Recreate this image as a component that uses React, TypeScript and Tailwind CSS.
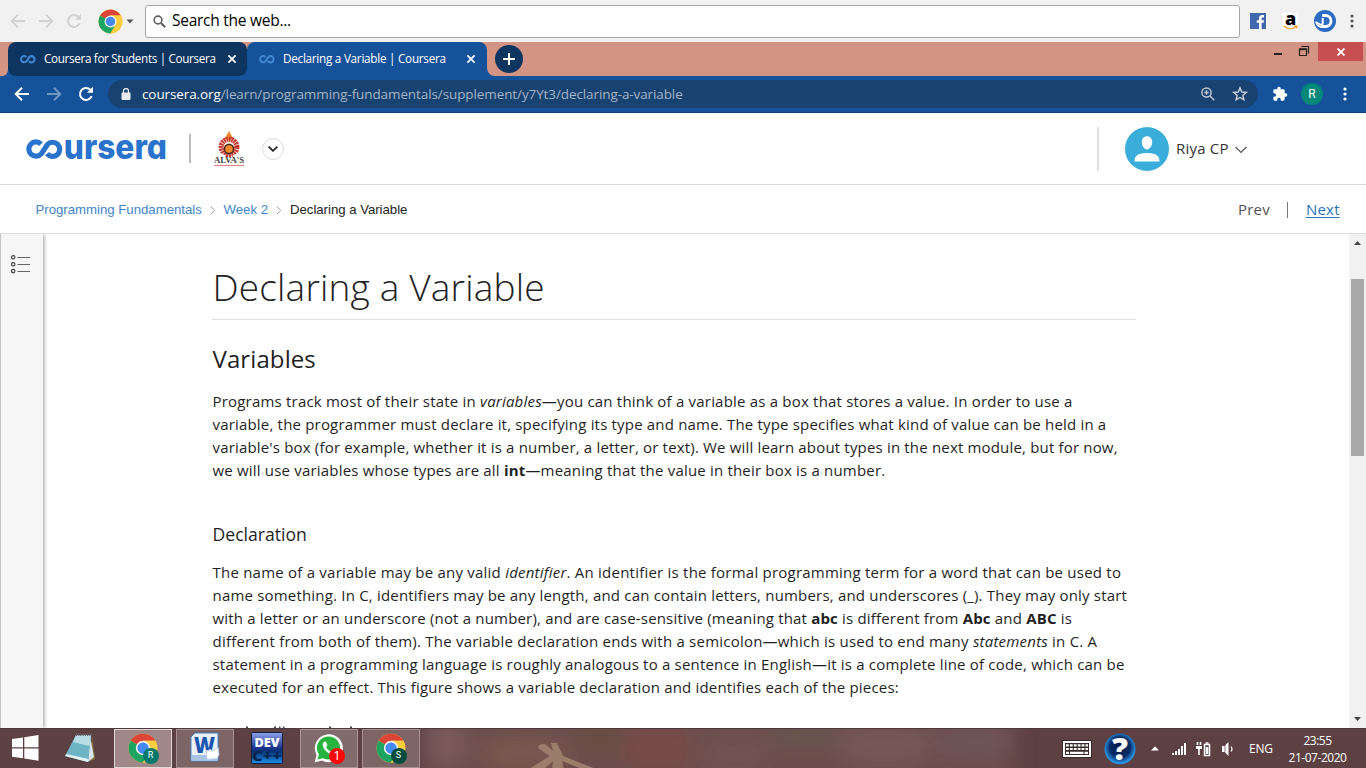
import type { ReactNode } from "react";

const ui = "font-['Open_Sans','Liberation_Sans',sans-serif]";

function Chrome({ size }: { size: number }) {
  return (
    <svg width={size} height={size} viewBox="0 0 48 48" className="shrink-0">
      <circle cx="24" cy="24" r="23" fill="#fcc934" />
      <path d="M24 24 4.1 12.5A23 23 0 0 1 43.9 12.5H24Z" fill="#db4437" />
      <path d="M4.1 12.5A23 23 0 0 0 24 47l10-17.3L24 24Z" fill="#1da462" />
      <path d="M43.9 12.5H24l10 17.3L24 47A23 23 0 0 0 43.9 12.5Z" fill="#ffcd40" />
      <circle cx="24" cy="24" r="11.5" fill="#f4f4f4" />
      <circle cx="24" cy="24" r="9" fill="#4688f4" />
    </svg>
  );
}

function Arrow({ flip, color, w = 2 }: { flip?: boolean; color: string; w?: number }) {
  return (
    <svg width="16" height="16" viewBox="0 0 16 16" fill="none" stroke={color} strokeWidth={w} className="shrink-0">
      {flip ? <path d="M1 8h13M8 1.7 14.3 8 8 14.3" /> : <path d="M15 8H2M8 1.7 1.7 8 8 14.3" />}
    </svg>
  );
}

function Reload({ color }: { color: string }) {
  return (
    <svg width="16" height="16" viewBox="0 0 16 16" className="shrink-0">
      <path d="M13.6 10.2A6 6 0 1 1 12.3 3.8L14 5.5" fill="none" stroke={color} strokeWidth="2" />
      <path d="M15 .8v6H9Z" fill={color} />
    </svg>
  );
}

function Infinity() {
  return (
    <svg width="16" height="10" viewBox="0 0 38 24" fill="none" stroke="#3f86d2" strokeWidth="5" className="shrink-0">
      <path d="M15 7A7.5 7.5 0 1 0 15.8 17L21.4 8A7.5 7.5 0 1 1 21.2 17" />
    </svg>
  );
}

function Close() {
  return (
    <svg width="10" height="10" viewBox="0 0 10 10" stroke="#fff" strokeWidth="1.7" className="shrink-0">
      <path d="m1.4 1.4 7.2 7.2M8.6 1.4 1.4 8.6" />
    </svg>
  );
}

function SearchBar() {
  return (
    <div className="flex h-[42px] shrink-0 items-center bg-[#f1f1f1] pl-[10px]">
      <Arrow color="#d2d2d2" w={1.8} />
      <div className="w-[12px]" />
      <Arrow flip color="#d2d2d2" w={1.8} />
      <div className="w-[12px]" />
      <Reload color="#d2d2d2" />
      <div className="w-[16px]" />
      <Chrome size={25} />
      <svg width="8" height="5" viewBox="0 0 8 5" className="ml-[3px]"><path d="M.5.5h7L4 4.5Z" fill="#555" /></svg>
      <div className="ml-[11px] flex h-[33px] w-[1095px] items-center rounded-[3px] border border-[#a6a6a6] bg-white pl-[7px]">
        <svg width="13" height="13" viewBox="0 0 13 13" fill="none" stroke="#606060"><circle cx="5" cy="5" r="3.9" strokeWidth="1.6" /><path d="m8 8 4.2 4.2" strokeWidth="2" /></svg>
        <span className={`${ui} ml-[6px] text-[15.5px] leading-none tracking-[-0.26px] whitespace-nowrap text-black`}>Search the web...</span>
      </div>
      <svg width="16" height="16" viewBox="0 0 16 16" className="ml-[10px]"><rect width="16" height="16" fill="#4267ac" /><path d="M9 16V9.700H6.800V7.200H9V5.400C9 3.200 10.200 2 12.400 2H14v2.400h-1.200c-.9 0-1.200.4-1.200 1.200v1.600H14l-.4 2.500h-2V16Z" fill="#fff" /></svg>
      <div className="relative ml-[16px] h-[16px] w-[16px] bg-white">
        <span className="absolute top-[-4px] left-[3px] font-['Open_Sans',sans-serif] text-[18px] leading-[18px] font-extrabold text-black">a</span>
        <svg width="16" height="16" viewBox="0 0 16 16" className="absolute top-[1px] left-0" fill="none" stroke="#f79a1d" strokeWidth="1.2"><path d="M1.500 12c4 3.300 9 3.300 12.500.8M12 12h3l-.7 2.500" /></svg>
      </div>
      <svg width="22" height="22" viewBox="0 0 22 22" className="ml-[16px]">
        <circle cx="11" cy="11" r="11" fill="#2e6bc2" />
        <path d="M8.200 5.500h3.300a5.500 5.500 0 0 1 0 11H7.800" fill="none" stroke="#fff" strokeWidth="2.800" />
        <path d="M8.700 8v5.200q0 2-3 1.200L1.500 12" fill="none" stroke="#fff" strokeWidth="2" />
        <path d="M1.300 12.500C4 15 7 16.500 11 16.500v1.400C6 18.500 3 17 1.300 12.500Z" fill="#fff" />
      </svg>
      <svg width="4" height="14" viewBox="0 0 4 14" className="ml-[14px]" fill="#555"><circle cx="2" cy="2" r="1.600" /><circle cx="2" cy="7" r="1.600" /><circle cx="2" cy="12" r="1.600" /></svg>
    </div>
  );
}

function Tabs() {
  return (
    <div className="flex h-[34px] shrink-0 bg-[#d39484]">
      <div className="flex h-full bg-[linear-gradient(90deg,#d39484_50%,#15529a_50%)]">
        <div className="h-full w-[8px] rounded-br-[6px] bg-[#d39484]" />
      </div>
      <div className="flex bg-[linear-gradient(#d39484_50%,#15529a_50%)]">
        <div className={`${ui} flex h-full w-[239px] items-center rounded-[8px] bg-[#0d355f] pl-[12px] text-[11.7px] text-white`}>
          <Infinity />
          <span className="ml-[8px] w-[183px] tracking-[-0.33px] whitespace-nowrap">Coursera for Students | Coursera</span>
          <Close />
        </div>
      </div>
      <div className={`${ui} flex h-full w-[240px] items-center rounded-t-[8px] bg-[#15529a] pl-[12px] text-[11.7px] text-white`}>
        <Infinity />
        <span className="ml-[8px] w-[183px] tracking-[-0.25px] whitespace-nowrap">Declaring a Variable | Coursera</span>
        <Close />
      </div>
      <div className="bg-[#15529a]"><div className="h-full w-[8px] rounded-bl-[8px] bg-[#d39484]" /></div>
      <svg width="28" height="28" viewBox="0 0 28 28" className="mt-[3px]"><circle cx="14" cy="14" r="14" fill="#0d355f" /><path d="M14 8v12M8 14h12" stroke="#fff" strokeWidth="2" /></svg>
      <div className="flex-1" />
      <svg width="36" height="12" viewBox="0 0 36 12" className="mt-[3px] mr-[8px]" fill="none" stroke="#222"><path d="M0 9h8" strokeWidth="2" /><path d="M25.500 4.500h7v6h-7zM27.500 1.500h7v7" strokeWidth="1.200" /><path d="M25 4.200h8" strokeWidth="2" /></svg>
      <div className="mr-[3px] flex h-[19px] w-[45px] items-center justify-center bg-[#c84f50]">
        <svg width="8" height="8" viewBox="0 0 8 8" stroke="#fff" strokeWidth="1.800"><path d="m.5.500 7 7M7.500.5l-7 7" /></svg>
      </div>
    </div>
  );
}

function Toolbar() {
  return (
    <div className="flex h-[37px] shrink-0 items-center border-b border-[#0f3f77] bg-[#15529a] pl-[14px]">
      <Arrow color="#fff" />
      <div className="w-[16px]" />
      <Arrow flip color="#6f97c4" />
      <div className="w-[16px]" />
      <Reload color="#fff" />
      <div className="ml-[14px] flex h-[28px] w-[1150px] items-center rounded-full bg-[#184270] pl-[13px]">
        <svg width="10" height="12" viewBox="0 0 10 12"><rect x=".5" y="4.500" width="9" height="7.500" rx="1" fill="#e8eaed" /><path d="M2.500 5V3a2.500 2.500 0 0 1 5 0v2" fill="none" stroke="#e8eaed" strokeWidth="1.300" /></svg>
        <span className={`${ui} ml-[11px] w-[1059px] text-[13.5px] tracking-[-0.1px] whitespace-nowrap text-[#a3b4c6]`}><span className="text-white">coursera.org</span>/learn/programming-fundamentals/supplement/y7Yt3/declaring-a-variable</span>
        <svg width="14" height="14" viewBox="0 0 14 14" fill="none" stroke="#bcc6d2" strokeWidth="1.500"><circle cx="5.500" cy="5.500" r="4.600" /><path d="m9 9 4.300 4.300M3.300 5.500h4.400M5.500 3.300v4.400" /></svg>
        <svg width="16" height="16" viewBox="0 0 16 16" className="ml-[17px]" fill="none" stroke="#c9d0d8" strokeWidth="1.400"><path d="m8 1.800 1.700 4.200 4.600.4-3.500 3 1.100 4.400L8 11.500l-3.900 2.300 1.100-4.400-3.500-3L6.300 6Z" /></svg>
      </div>
      <svg width="16" height="16" viewBox="0 0 24 24" className="ml-[14px]" fill="#fff"><path d="M20.500 11H19V7a2 2 0 0 0-2-2h-4V3.500a2.500 2.500 0 0 0-5 0V5H4a2 2 0 0 0-2 2v3.800h1.500a2.700 2.700 0 0 1 0 5.400H2V20a2 2 0 0 0 2 2h3.800v-1.500a2.700 2.700 0 0 1 5.400 0V22H17a2 2 0 0 0 2-2v-4h1.500a2.500 2.500 0 0 0 0-5Z" /></svg>
      <div className="ml-[13px] flex h-[22px] w-[22px] items-center justify-center rounded-full bg-[#00897b] font-[Roboto,sans-serif] text-[12px] text-white">R</div>
      <svg width="4" height="14" viewBox="0 0 4 14" className="ml-[19.5px]" fill="#fff"><circle cx="2" cy="2" r="1.600" /><circle cx="2" cy="7" r="1.600" /><circle cx="2" cy="12" r="1.600" /></svg>
    </div>
  );
}

function SiteHeader() {
  return (
    <div className="flex h-[72px] shrink-0 items-center border-b border-[#dcdcdc] bg-white pl-[26px]">
      <svg width="141" height="24" viewBox="0 0 141 24" className="shrink-0 overflow-visible">
        <path d="M15 7.100A7.100 7.100 0 1 0 15.400 16.600L21.400 7.500A7.100 7.100 0 1 1 21 16.700" fill="none" stroke="#2a73cc" strokeWidth="5.200" />
        <text x="37.800" y="21.500" textLength="103.200" lengthAdjust="spacingAndGlyphs" fill="#2a73cc" fontSize="34" fontWeight="800" className="font-[Inter,sans-serif] [font-feature-settings:'cv11']">ursera</text>
      </svg>
      <div className="ml-[22px] h-[29px] w-[2px] bg-[#bcbcbc]" />
      <svg width="31" height="36" viewBox="0 0 31 36" className="ml-[23px] overflow-visible">
        <path d="M15 0 10.500 8h9Z" fill="#f0862b" />
        <path d="M15 4.500 12.500 9h5Z" fill="#fbb235" />
        <circle cx="15" cy="16" r="7.800" fill="none" stroke="#c8382f" strokeWidth="5.200" strokeDasharray="2 .6" />
        <circle cx="15" cy="18" r="5.400" fill="#4b2a20" />
        <circle cx="15" cy="18" r="3.800" fill="#ef8a2c" />
        <path d="M4 22l7 3.500M26 22l-7 3.500" stroke="#fff" strokeWidth="2.500" />
        <text x="0" y="32" textLength="30" lengthAdjust="spacingAndGlyphs" fontSize="8.500" fontWeight="700" fill="#444" className="font-['Liberation_Serif',serif]">ALVA'S</text>
        <path d="M0 34.500h30" stroke="#e58585" strokeWidth="1.200" />
      </svg>
      <div className="ml-[17px] flex h-[22px] w-[22px] items-center justify-center rounded-full border border-[#dadada]">
        <svg width="10" height="6" viewBox="0 0 10 6" fill="none" stroke="#222" strokeWidth="1.800"><path d="M.6.700 5 4.800 9.400.7" /></svg>
      </div>
      <div className="flex-1" />
      <div className="h-[44px] w-[2px] bg-[#dedede]" />
      <svg width="44" height="44" viewBox="0 0 44 44" className="ml-[26px]"><circle cx="22" cy="22" r="22" fill="#3badda" /><path d="M22 9.300c3.200 0 5.200 2.300 5.200 5.800 0 4-2.300 7.400-5.200 7.400s-5.200-3.400-5.200-7.400c0-3.500 2-5.800 5.200-5.800ZM9.500 34.500c0-5 2.500-8.500 12.500-8.500s12.500 3.500 12.500 8.500Z" fill="#fff" /></svg>
      <span className={`${ui} ml-[7px] w-[59px] text-[15px] tracking-[0.2px] whitespace-nowrap text-[#333]`}>Riya CP</span>
      <svg width="12" height="8" viewBox="0 0 12 8" className="mt-[2px] mr-[119px]" fill="none" stroke="#555" strokeWidth="1.200"><path d="M.6 1 6 6.500 11.400 1" /></svg>
    </div>
  );
}

function Chevron() {
  return <svg width="6" height="9" viewBox="0 0 6 9" fill="none" stroke="#999" strokeWidth="1" className="mt-[2px]"><path d="m.8.6 4 3.900-4 3.900" /></svg>;
}

function Breadcrumbs() {
  return (
    <div className="flex h-[49px] shrink-0 items-center border-b border-[#dcdcdc] bg-white pt-px pl-[35.5px] font-['Liberation_Sans',sans-serif] text-[13.2px] whitespace-nowrap">
      <span className="w-[167px] text-[#4285c8]">Programming Fundamentals</span>
      <div className="mr-[7.5px] ml-[7.5px]"><Chevron /></div>
      <span className="w-[45px] text-[#4285c8]">Week 2</span>
      <div className="mr-[8px] ml-[7.5px]"><Chevron /></div>
      <span className="tracking-[-0.02px] text-[#222]">Declaring a Variable</span>
      <div className="flex-1" />
      <div className={`${ui} flex items-center text-[15px] tracking-[0.2px]`}>
        <span className="w-[49px] text-[#555]">Prev</span>
        <div className="h-[16px] w-px bg-[#777]" />
        <span className="ml-[18px] w-[60px] text-[#2a73b8] underline underline-offset-2">Next</span>
      </div>
    </div>
  );
}

function Line({ children, s }: { children: ReactNode; s: string }) {
  return <div className={`h-[23px] whitespace-nowrap ${s}`}>{children}</div>;
}

function Article() {
  return (
    <div className="flex min-h-0 flex-1 overflow-hidden bg-white">
      <div className="z-10 w-[43px] shrink-0 border-l border-[#c4c4c4] bg-[#f6f6f6] pt-[20px] pl-[10px] shadow-[1px_0_4px_rgba(0,0,0,0.4)]">
        <svg width="20" height="20" viewBox="0 0 20 20" fill="none" stroke="#444"><g strokeWidth="1.200"><circle cx="2.200" cy="3.300" r="1.700" /><circle cx="2.200" cy="10.300" r="1.700" /><circle cx="2.200" cy="17.100" r="1.700" /></g><path d="M6.500 3.500H19M6.500 10.500H19M6.500 17.500H19" stroke="#666" /></svg>
      </div>
      <div className={`${ui} ml-[169px] w-[924px] shrink-0 text-[15px] leading-[23px] text-[#1f1f1f]`}>
        <h1 className="mt-[26px] h-[60px] border-b border-[#dedede] pl-[0.5px] text-[37px] leading-[54px] font-light tracking-[0.18px] whitespace-nowrap text-[#222]">Declaring a Variable</h1>
        <h2 className="mt-[21px] h-[36px] pl-[0.5px] text-[24px] leading-[36px] tracking-[0.1px] whitespace-nowrap">Variables</h2>
        <div className="mt-[13px] pl-[0.5px]">
          <Line s="tracking-[0.2px]">Programs track most of their state in <i>variables</i>—you can think of a variable as a box that stores a value. In order to use a</Line>
          <Line s="tracking-[0.185px]">variable, the programmer must declare it, specifying its type and name. The type specifies what kind of value can be held in a</Line>
          <Line s="tracking-[0.175px]">variable's box (for example, whether it is a number, a letter, or text). We will learn about types in the next module, but for now,</Line>
          <Line s="tracking-[0.19px]">we will use variables whose types are all <b>int</b>—meaning that the value in their box is a number.</Line>
        </div>
        <h3 className="mt-[38px] h-[28px] pl-[0.5px] text-[17.6px] leading-[28px] whitespace-nowrap">Declaration</h3>
        <div className="mt-[13px] pl-[0.5px]">
          <Line s="tracking-[0.225px]">The name of a variable may be any valid <i>identifier</i>. An identifier is the formal programming term for a word that can be used to</Line>
          <Line s="tracking-[0.19px]">name something. In C, identifiers may be any length, and can contain letters, numbers, and underscores (_). They may only start</Line>
          <Line s="tracking-[0.18px]">with a letter or an underscore (not a number), and are case-sensitive (meaning that <b>abc</b> is different from <b>Abc</b> and <b>ABC</b> is</Line>
          <Line s="tracking-[0.22px]">different from both of them). The variable declaration ends with a semicolon—which is used to end many <i>statements</i> in C. A</Line>
          <Line s="tracking-[0.195px]">statement in a programming language is roughly analogous to a sentence in English—it is a complete line of code, which can be</Line>
          <Line s="tracking-[0.18px]">executed for an effect. This figure shows a variable declaration and identifies each of the pieces:</Line>
        </div>
        <svg width="160" height="4" viewBox="0 0 160 4" className="mt-[26px]" fill="#444"><path d="M34 1.500h2v3h-2zM62 1.500h2v3h-2zM67 1.500h1.500v3H67zM71 1.500h1.500v3H71zM117 1.500h2v3h-2zM138 1.500h2v3h-2z" /></svg>
      </div>
      <div className="flex-1" />
      <div className="flex w-[17px] shrink-0 flex-col items-center bg-[#f1f1f1]">
        <svg width="7" height="4" viewBox="0 0 7 4" className="mt-[7px]"><path d="M0 4h7L3.500 0Z" fill="#444" /></svg>
        <div className="mt-[34px] h-[177px] w-[13px] bg-[#a8a8a8]" />
        <div className="flex-1" />
        <svg width="7" height="4" viewBox="0 0 7 4" className="mb-[7px]"><path d="M0 0h7L3.500 4Z" fill="#444" /></svg>
      </div>
    </div>
  );
}

function AppButton({ children, s }: { children?: ReactNode; s: string }) {
  return <div className={`flex h-[39px] shrink-0 items-center justify-center border ${s}`}>{children}</div>;
}

function Wallpaper() {
  return (
    <svg width="1366" height="40" viewBox="0 0 1366 40" className="absolute inset-0">
      <defs><filter id="soft" x="-5%" y="-50%" width="110%" height="200%"><feGaussianBlur stdDeviation="10" /></filter></defs>
      <g filter="url(#soft)">
        <rect x="425" y="-20" width="590" height="80" fill="#6c4e4c" />
        <ellipse cx="445" cy="15" rx="22" ry="22" fill="#7b5a5c" />
        <ellipse cx="525" cy="25" rx="45" ry="16" fill="#7a584f" />
        <ellipse cx="600" cy="5" rx="25" ry="18" fill="#6b4e43" />
        <ellipse cx="658" cy="20" rx="35" ry="22" fill="#784b4a" />
        <ellipse cx="735" cy="25" rx="35" ry="20" fill="#715252" />
        <ellipse cx="810" cy="6" rx="45" ry="12" fill="#685450" />
        <ellipse cx="885" cy="16" rx="50" ry="22" fill="#765756" />
        <ellipse cx="975" cy="12" rx="40" ry="14" fill="#70545a" />
      </g>
      <path d="m529 40 21-13-11-7q-3-5 6-5l8 7-2-8h6l6 13 33 13h-14l-20-8 2 8h-12l1-8-9 8Z" fill="#a08270" opacity=".9" />
    </svg>
  );
}

function Taskbar() {
  return (
    <div className="relative h-[40px] shrink-0 overflow-hidden border-t border-[#4e393a] bg-[#5d4142]">
      <Wallpaper />
      <div className="relative flex h-full items-center">
        <svg width="27" height="26" viewBox="0 0 27 26" className="mt-[-2px] ml-[12px] shrink-0" fill="#fff"><path d="M0 4 11 2.400v9.800H0zM12.300 2.200 26.500 0v12.200H12.300zM0 13.500h11v9.800L0 21.700zM12.300 13.500h14.200v12.300l-14.200-2.200z" /></svg>
        <svg width="32" height="30" viewBox="0 0 32 30" className="mt-[-2px] ml-[26px] shrink-0">
          <path d="m27 3 3 23-5 2Z" fill="#8a713d" />
          <path d="M25 3 29 24l-6 5Z" fill="#d5e4e8" />
          <path d="M11 2h15l-3 27-8-2-15-4Z" fill="#6fb4c4" />
          <path d="M11 2h15l-1.500 11L8 9Z" fill="#b9dde4" />
          <path d="m0 23 15 4 8 2 .5-3L1.500 21Z" fill="#e2f0f2" />
          <path d="M11 1.800h16" stroke="#666" strokeWidth="2.500" strokeDasharray="1.200 1" />
        </svg>
        <AppButton s="ml-[17px] w-[58px] border-[#e2d8d8] bg-[#9f8788]">
          <div className="relative h-[31px] w-[31px]">
            <Chrome size={30} />
            <div className="absolute top-[15px] left-[15px] flex h-[16px] w-[16px] items-center justify-center rounded-full bg-[#00796b] font-[Roboto,sans-serif] text-[9px] text-white">R</div>
          </div>
        </AppButton>
        <AppButton s="ml-[4px] w-[58px] border-[#a59192] bg-[#7d6465]">
          <svg width="30" height="30" viewBox="0 0 30 30" className="mt-[-3px] overflow-visible"><path d="M5 1h23v28H1V5Z" fill="#e9f1fb" stroke="#4d80c0" /><path d="M1.500 23h26v5.500h-26Z" fill="#a9c3e5" /><text x="4" y="21" textLength="21" lengthAdjust="spacingAndGlyphs" fontSize="23" fontWeight="800" fill="#1c55ae" className="font-['Open_Sans',sans-serif]">W</text><path d="m16 19 5-1.500 1 2 6-4 1 7-2 4-10 1Z" fill="#fff" stroke="#bdd0ea" /></svg>
        </AppButton>
        <svg width="32" height="32" viewBox="0 0 32 32" className="mt-[-1px] ml-[17px] shrink-0">
          <defs><linearGradient id="dev" x2="0" y2="1"><stop stopColor="#8fa3ec" /><stop offset=".48" stopColor="#1d3790" /><stop offset=".6" stopColor="#062f74" /><stop offset="1" stopColor="#1c8fe8" /></linearGradient></defs>
          <rect x=".5" y=".5" width="31" height="31" rx="1" fill="url(#dev)" stroke="#151c3e" />
          <g className="font-['Open_Sans',sans-serif]" fontWeight="800"><text x="3.500" y="15" textLength="25" lengthAdjust="spacingAndGlyphs" fontSize="13" fill="#fff">DEV</text><text x="1" y="28.500" textLength="30" lengthAdjust="spacingAndGlyphs" fontSize="14" fill="#06254f">C++</text></g>
        </svg>
        <AppButton s="ml-[17px] w-[58px] border-[#a99596] bg-[#826b6c]">
          <div className="relative h-[30px] w-[30px]">
            <svg width="29" height="29" viewBox="0 0 29 29"><path d="M.5 28.500 2.600 21A14 14 0 1 1 8 26.400Z" fill="#fff" /><path d="m3.500 25.500 1.400-5A11.600 11.600 0 1 1 9 24.200Z" fill="#27b43e" /><path d="M10.500 7.500c-3 1.500-2 6 1.500 9.500s8 5 9.500 2c.8-1.600-1.500-2.500-3-3l-1.700 1.600c-2.300-1-3.800-2.600-4.600-4.600l1.300-1.700c-.8-2.200-1.400-4.200-3-3.800Z" fill="#fff" /></svg>
            <div className="absolute top-[14px] left-[15px] flex h-[16px] w-[16px] items-center justify-center rounded-full bg-[#f80808] font-['Open_Sans',sans-serif] text-[13px] leading-none text-white">1</div>
          </div>
        </AppButton>
        <AppButton s="ml-[4px] w-[58px] border-[#a59192] bg-[#7d6465]">
          <div className="relative h-[31px] w-[31px]">
            <Chrome size={30} />
            <div className="absolute top-[15px] left-[15px] flex h-[16px] w-[16px] items-center justify-center rounded-full bg-[#004d40] font-[Roboto,sans-serif] text-[9px] text-white">S</div>
          </div>
        </AppButton>
        <div className="flex-1" />
        <svg width="30" height="18" viewBox="0 0 30 18" className="shrink-0"><rect x=".5" y=".5" width="29" height="17" fill="#fff" stroke="#3a2929" /><rect x="3" y="3" width="24" height="12" fill="#3a2929" /><g stroke="#fff" strokeWidth="2.200" strokeDasharray="2.800 1.100"><path d="M4 5.300h22M4 9h22" /></g><path d="M4 12.800h3M8 12.800h13.500M22.500 12.800H26" stroke="#fff" strokeWidth="2.200" /></svg>
        <svg width="32" height="32" viewBox="0 0 32 32" className="ml-[12px] shrink-0 overflow-visible"><defs><radialGradient id="help" cy=".45"><stop stopColor="#061a45" /><stop offset=".65" stopColor="#0a2a66" /><stop offset="1" stopColor="#2b8fdd" /></radialGradient></defs><circle cx="16" cy="16" r="15.500" fill="url(#help)" /><text x="8" y="27" textLength="16" lengthAdjust="spacingAndGlyphs" fontSize="30" fontWeight="800" fill="#fff" className="font-['Open_Sans',sans-serif]">?</text></svg>
        <svg width="8" height="5" viewBox="0 0 8 5" className="ml-[15px] shrink-0"><path d="M0 4.500h8L4 .3Z" fill="#fff" /></svg>
        <svg width="15" height="12" viewBox="0 0 15 12" className="ml-[13px] shrink-0" fill="#fff"><path d="M0 10h2v2H0zM3 8h2v4H3zM6 6h2v6H6zM9 3h2v9H9zM12 0h2v12h-2z" /></svg>
        <svg width="15" height="16" viewBox="0 0 15 16" className="ml-[9px] shrink-0" fill="none" stroke="#fff"><path d="M8.500 3.500h5v11h-5z" strokeWidth="1.500" /><path d="M9.500 2h3M1.500 1v3M4.500 1v3M3 8v6" strokeWidth="1.600" /><path d="M0 5h6v3H0z" fill="#fff" stroke="none" /><path d="M9.700 6h2.600v7H9.700z" fill="#fff" stroke="none" /></svg>
        <svg width="13" height="14" viewBox="0 0 13 14" className="ml-[11px] shrink-0"><path d="M0 4h2.500L6.500 0v14L2.500 10H0z" fill="#fff" /><path d="M3 3v8" stroke="#5d4142" strokeWidth=".7" /><path d="M9 4.500q2 2.500 0 5" fill="none" stroke="#fff" strokeWidth="1.200" /></svg>
        <span className={`${ui} ml-[14px] w-[24px] text-[12px] tracking-[-0.2px] whitespace-nowrap text-white`}>ENG</span>
        <div className={`${ui} mr-[19px] ml-[15px] flex w-[59px] flex-col items-center text-[12px] leading-[17px] tracking-[-0.47px] whitespace-nowrap text-white`}><span>23:55</span><span>21-07-2020</span></div>
      </div>
    </div>
  );
}

export default function App() {
  return (
    <div className="flex h-[768px] w-[1366px] flex-col overflow-hidden bg-white">
      <SearchBar />
      <Tabs />
      <Toolbar />
      <SiteHeader />
      <Breadcrumbs />
      <Article />
      <Taskbar />
    </div>
  );
}
